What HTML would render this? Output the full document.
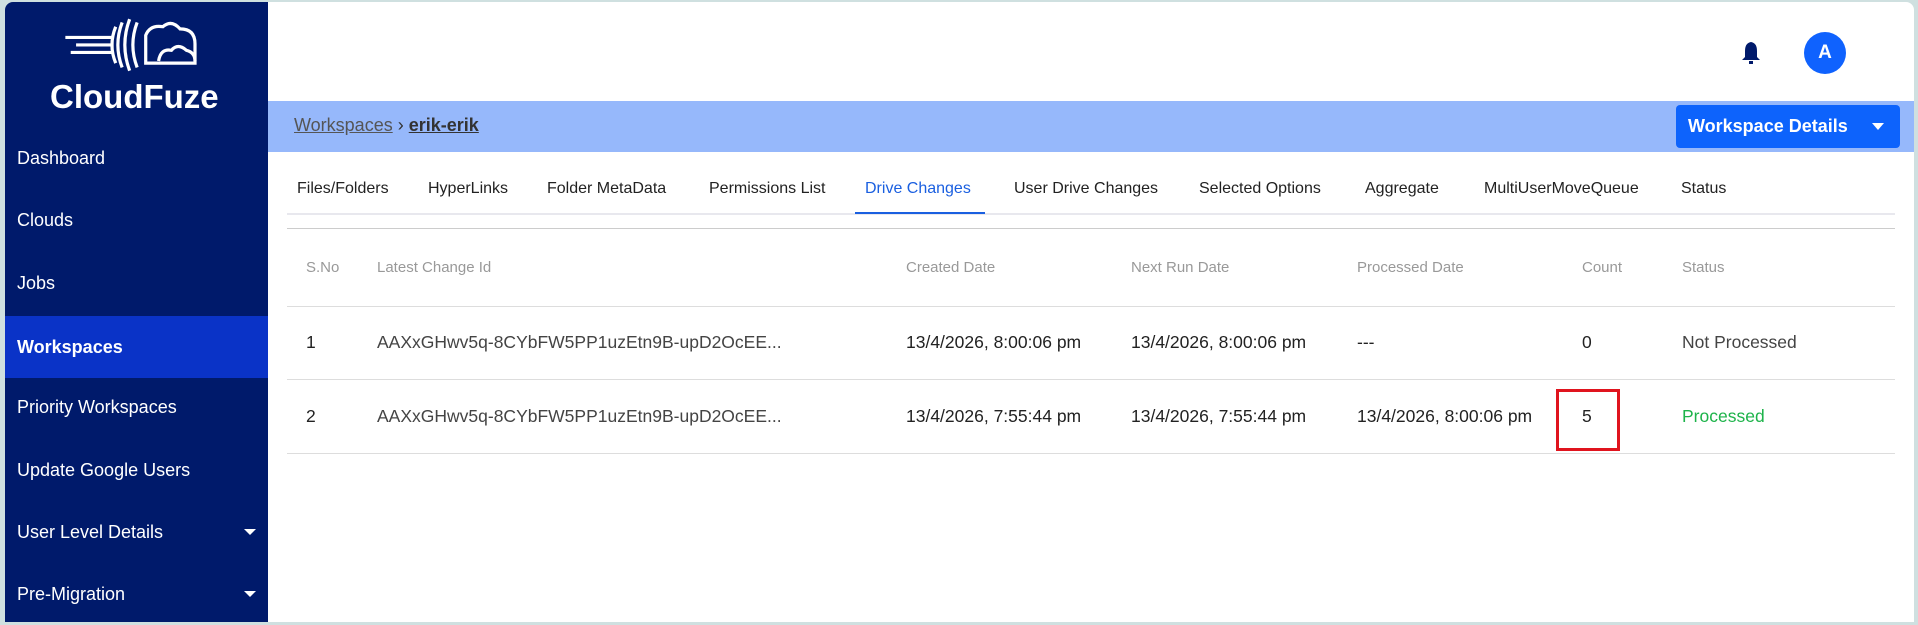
<!DOCTYPE html>
<html><head><style>
*{margin:0;padding:0;box-sizing:border-box}
body{width:1918px;height:608px;background:#cfe0e0;font-family:"Liberation Sans",sans-serif;position:relative;overflow:hidden}
.side{position:absolute;left:5px;top:2px;width:263px;height:620px;background:#001a6b;border-radius:8px 0 0 0}
.side .it{position:absolute;left:12px;color:#fff;font-size:18px;height:62px;line-height:62px;width:251px}
.side .act{background:#0a33c7;left:0;width:263px;padding-left:12px;font-weight:bold}
.caret{position:absolute;right:12px;top:28px;border:6px solid transparent;border-top:6px solid #fff}
.main{position:absolute;left:268px;top:2px;width:1646px;height:620px;background:#fff;border-radius:0 8px 0 0}
.band{position:absolute;left:268px;top:101px;width:1646px;height:51px;background:#96b8fb}
.abs{position:absolute;white-space:nowrap}
.tab{position:absolute;top:180px;font-size:16px;color:#222}
.th{position:absolute;top:259px;font-size:15px;color:#999}
.td{position:absolute;font-size:17.5px;color:#222}
.line{position:absolute;left:287px;width:1608px;height:1px;background:#ddd}
</style></head><body>
<div class="side">
 <svg class="abs" style="left:55px;top:14px" width="150" height="60" viewBox="0 0 140 56">
  <g stroke="#fff" stroke-width="3" fill="none">
   <line x1="5" y1="20" x2="50" y2="20"/><line x1="15" y1="27" x2="50" y2="27"/><line x1="10" y1="34" x2="50" y2="34"/>
   <path d="M52 10 Q45 27 52 44"/><path d="M58 6 Q50 27 58 48"/><path d="M65 3 Q56 27 65 51"/><path d="M72 6 Q64 27 72 48"/>
   <path d="M80 44 L80 18 Q84 8 96 10 Q104 3 112 12 Q126 12 126 26 L126 44 Z"/>
   <path d="M92 42 Q94 30 104 32 Q110 25 118 32 Q126 34 126 42"/>
  </g>
 </svg>
 <div class="abs" style="left:45px;top:76px;color:#fff;font-size:33px;font-weight:bold">CloudFuze</div>
 <div class="it" style="top:125px">Dashboard</div>
 <div class="it" style="top:187px">Clouds</div>
 <div class="it" style="top:250px">Jobs</div>
 <div class="it act" style="top:314px">Workspaces</div>
 <div class="it" style="top:374px">Priority Workspaces</div>
 <div class="it" style="top:437px">Update Google Users</div>
 <div class="it" style="top:499px">User Level Details<span class="caret"></span></div>
 <div class="it" style="top:561px">Pre-Migration<span class="caret"></span></div>
</div>
<div class="main"></div>
<svg class="abs" style="left:1740px;top:40px" width="22" height="26" viewBox="0 0 22 26"><path d="M11 2 Q5 3 5 11 L5 17 L2 20 L20 20 L17 17 L17 11 Q17 3 11 2Z" fill="#001a6b"/><rect x="9" y="21" width="4" height="3" fill="#001a6b"/></svg>
<div class="abs" style="left:1804px;top:32px;width:42px;height:42px;border-radius:50%;background:#0f62fe;color:#fff;font-weight:bold;font-size:19px;text-align:center;line-height:42px">A</div>
<div class="band"></div>
<div class="abs" style="left:294px;top:115px;font-size:18px;color:#555"><u>Workspaces</u> <span style="color:#333">›</span> <b style="color:#333"><u>erik-erik</u></b></div>
<div class="abs" style="left:1676px;top:105px;width:224px;height:43px;background:#0d63fc;border-radius:4px;color:#fff;font-size:18px;font-weight:bold;line-height:43px;padding-left:12px">Workspace Details<span style="position:absolute;right:16px;top:18px;border:6px solid transparent;border-top:7px solid #fff"></span></div>
<div class="tab" style="left:297px">Files/Folders</div>
<div class="tab" style="left:428px">HyperLinks</div>
<div class="tab" style="left:547px">Folder MetaData</div>
<div class="tab" style="left:709px">Permissions List</div>
<div class="tab" style="left:865px;color:#1a5fe0">Drive Changes</div>
<div class="tab" style="left:1014px">User Drive Changes</div>
<div class="tab" style="left:1199px">Selected Options</div>
<div class="tab" style="left:1365px">Aggregate</div>
<div class="tab" style="left:1484px">MultiUserMoveQueue</div>
<div class="tab" style="left:1681px">Status</div>
<div class="line" style="top:213px;height:2px;background:#e8e8ee"></div>
<div class="abs" style="left:855px;top:212px;width:130px;height:2px;background:#1a5fe0"></div>
<div class="line" style="top:228px;background:#ccc"></div>
<div class="th" style="left:306px">S.No</div>
<div class="th" style="left:377px">Latest Change Id</div>
<div class="th" style="left:906px">Created Date</div>
<div class="th" style="left:1131px">Next Run Date</div>
<div class="th" style="left:1357px">Processed Date</div>
<div class="th" style="left:1582px">Count</div>
<div class="th" style="left:1682px">Status</div>
<div class="line" style="top:306px"></div>
<div class="td" style="top:332px;left:306px">1</div>
<div class="td" style="top:332px;left:377px;color:#444">AAXxGHwv5q-8CYbFW5PP1uzEtn9B-upD2OcEE...</div>
<div class="td" style="top:332px;left:906px">13/4/2026, 8:00:06 pm</div>
<div class="td" style="top:332px;left:1131px">13/4/2026, 8:00:06 pm</div>
<div class="td" style="top:332px;left:1357px">---</div>
<div class="td" style="top:332px;left:1582px">0</div>
<div class="td" style="top:332px;left:1682px;color:#444">Not Processed</div>
<div class="line" style="top:379px"></div>
<div class="td" style="top:406px;left:306px">2</div>
<div class="td" style="top:406px;left:377px;color:#444">AAXxGHwv5q-8CYbFW5PP1uzEtn9B-upD2OcEE...</div>
<div class="td" style="top:406px;left:906px">13/4/2026, 7:55:44 pm</div>
<div class="td" style="top:406px;left:1131px">13/4/2026, 7:55:44 pm</div>
<div class="td" style="top:406px;left:1357px">13/4/2026, 8:00:06 pm</div>
<div class="td" style="top:406px;left:1582px">5</div>
<div class="td" style="top:406px;left:1682px;color:#1db34a">Processed</div>
<div class="line" style="top:453px"></div>
<div class="abs" style="left:1556px;top:389px;width:64px;height:62px;border:3px solid #e0141e"></div>
</body></html>
